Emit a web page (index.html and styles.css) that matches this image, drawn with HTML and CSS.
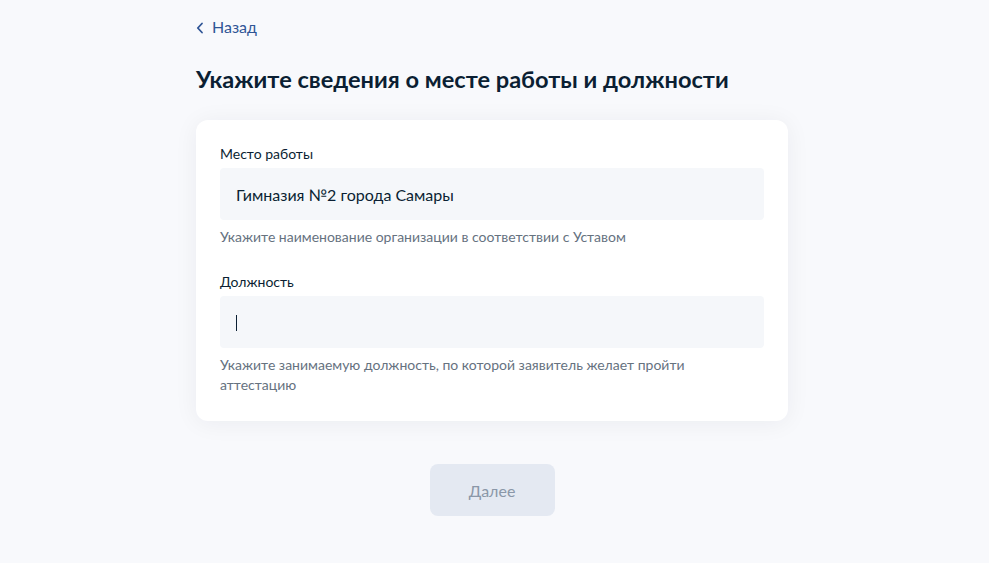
FILE: index.html
```html
<!DOCTYPE html>
<html lang="ru">
<head>
<meta charset="utf-8">
<title>Место работы</title>
<link rel="stylesheet" href="styles.css">
</head>
<body>
<main class="page">
  <a class="back" href="#">
    <svg class="back-icon" width="8" height="12" viewBox="0 0 8 12" aria-hidden="true"><path d="M6 1.5 L1.8 6 L6 10.5" fill="none" stroke="#2f5596" stroke-width="1.8" stroke-linecap="round" stroke-linejoin="round"/></svg>
    <span>Назад</span>
  </a>
  <h1 class="title">Укажите сведения о месте работы и должности</h1>
  <section class="card">
    <div class="field">
      <div class="label">Место работы</div>
      <div class="input">Гимназия №2 города Самары</div>
      <div class="hint">Укажите наименование организации в соответствии с Уставом</div>
    </div>
    <div class="field">
      <div class="label">Должность</div>
      <div class="input"><span class="caret"></span></div>
      <div class="hint">Укажите занимаемую должность, по которой заявитель желает пройти<br>аттестацию</div>
    </div>
  </section>
  <div class="actions">
    <button class="btn" type="button">Далее</button>
  </div>
</main>
</body>
</html>
```
FILE: styles.css
```css
* { box-sizing: border-box; }
html, body { margin: 0; padding: 0; }
body {
  background: #f8f9fc;
  font-family: Lato, "Noto Sans", sans-serif;
  color: #0b1f33;
  min-height: 563px;
}
.page {
  width: 592px;
  margin-left: 196px;
  padding-top: 15px;
  display: flex;
  flex-direction: column;
}
.back {
  display: flex;
  align-items: center;
  gap: 8px;
  color: #2f5596;
  text-decoration: none;
  font-size: 16px;
  line-height: 24px;
  height: 24px;
}
.back-icon { margin-top: 1px; }
.title {
  margin: 24px 0 0;
  font-size: 23.6px;
  line-height: 32px;
  font-weight: 700;
  color: #0b1f33;
}
.card {
  margin-top: 25px;
  background: #fff;
  border-radius: 12px;
  box-shadow: 0 2px 24px rgba(11, 31, 51, 0.06);
  padding: 24px 24px 26px;
  display: flex;
  flex-direction: column;
  gap: 25px;
}
.field { display: flex; flex-direction: column; }
.label {
  font-size: 14px;
  line-height: 20px;
  color: #0b1f33;
}
.input {
  margin-top: 4px;
  height: 52px;
  background: #f5f7fa;
  border-radius: 4px;
  padding: 0 16px;
  display: flex;
  align-items: center;
  font-size: 16px;
  color: #0b1f33;
}
.caret {
  display: block;
  width: 1px;
  height: 16px;
  margin-top: 2px;
  background: #0b1f33;
}
.hint {
  margin-top: 7px;
  font-size: 14px;
  line-height: 20px;
  color: #66727f;
}
.actions {
  margin-top: 43px;
  display: flex;
  justify-content: center;
}
.btn {
  height: 52px;
  width: 125px;
  border: none;
  border-radius: 8px;
  background: #e4e9f2;
  color: #8a97a8;
  font-family: Lato, "Noto Sans", sans-serif;
  font-size: 16px;
}
```
